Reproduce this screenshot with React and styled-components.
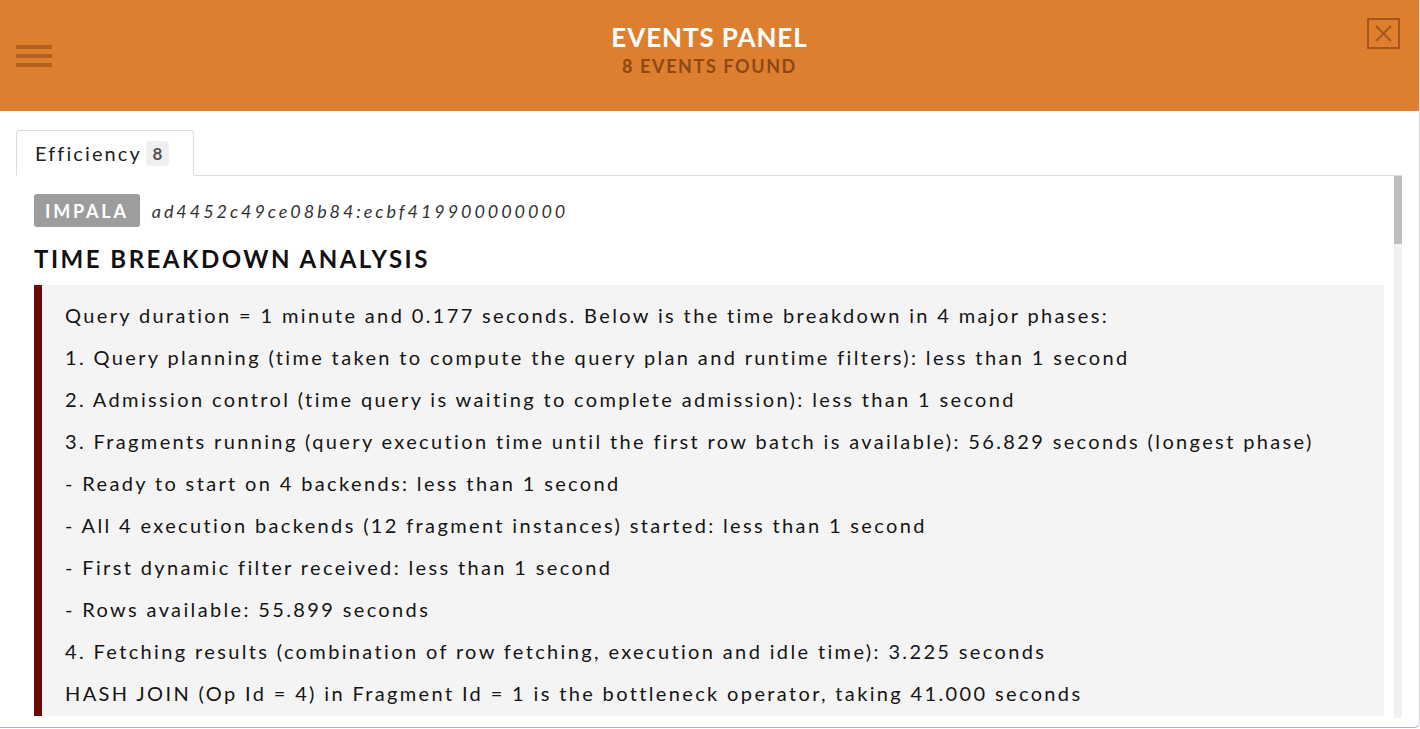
import React from 'react'
import styled, { createGlobalStyle } from 'styled-components'

const GlobalStyle = createGlobalStyle`
  html, body {
    margin: 0;
    padding: 0;
    background: #ffffff;
  }
  body {
    font-family: Lato, 'Open Sans', sans-serif;
    color: #111;
  }
`

const Panel = styled.div`
  width: 1420px;
  height: 728px;
  box-sizing: border-box;
  background: #fff;
  border-bottom: 1px solid #a9b3bd;
  border-right: 1px solid #d4dae0;
  border-bottom-right-radius: 6px;
  overflow: hidden;
  display: flex;
  flex-direction: column;
`

const Header = styled.header`
  height: 111px;
  flex-shrink: 0;
  background: #de7f30;
  display: grid;
  grid-template-columns: 1fr auto 1fr;
`

const MenuButton = styled.div`
  align-self: center;
  justify-self: start;
  margin-left: 16px;
  display: flex;
  flex-direction: column;
  gap: 5px;
  span {
    display: block;
    width: 36px;
    height: 4px;
    background: #b4611f;
  }
`

const TitleBlock = styled.div`
  display: flex;
  flex-direction: column;
  align-items: center;
  padding-top: 23px;
`

const Title = styled.h1`
  margin: 0;
  font-size: 26px;
  line-height: 28px;
  font-weight: 700;
  letter-spacing: 0.9px;
  color: #fff;
`

const Subtitle = styled.div`
  margin-top: 5px;
  font-size: 18px;
  line-height: 20px;
  font-weight: 700;
  letter-spacing: 1.6px;
  color: #8c4913;
`

const CloseButton = styled.div`
  justify-self: end;
  margin-top: 18px;
  margin-right: 19px;
  color: #a6581c;
`

const Body = styled.div`
  padding: 19px 16px 0 16px;
  display: flex;
  flex-direction: column;
`

const TabBar = styled.div`
  display: flex;
  width: 1386px;
  border-bottom: 1px solid #dcdcdc;
`

const Tab = styled.div`
  box-sizing: border-box;
  height: 46px;
  padding: 0 24px 0 18px;
  margin-bottom: -1px;
  display: flex;
  align-items: center;
  gap: 4px;
  border: 1px solid #dcdcdc;
  border-bottom-color: #fff;
  border-radius: 4px 4px 0 0;
  font-size: 20px;
  letter-spacing: 2.1px;
  color: #222;
`

const Count = styled.span`
  display: inline-flex;
  align-items: center;
  justify-content: center;
  width: 23px;
  height: 25px;
  border-radius: 4px;
  background: #efefef;
  color: #555;
  font-size: 17px;
  font-weight: 700;
  letter-spacing: 0;
`

const ScrollArea = styled.div`
  display: flex;
  align-items: flex-start;
  width: 1386px;
`

const Viewport = styled.div`
  flex: 1;
  height: 540px;
  overflow: hidden;
  padding: 18px 10px 0 18px;
  box-sizing: border-box;
`

const Scrollbar = styled.div`
  width: 8px;
  height: 542px;
  background: #f1f1f1;
  border-bottom-right-radius: 3px;
`

const Thumb = styled.div`
  height: 68px;
  background: #bdbdbd;
`

const MetaRow = styled.div`
  display: flex;
  align-items: center;
  gap: 12px;
`

const EngineTag = styled.span`
  display: inline-flex;
  align-items: center;
  height: 33px;
  padding: 0 11px 0 11px;
  border-radius: 3px;
  background: #9d9d9d;
  color: #fff;
  font-size: 18px;
  font-weight: 700;
  letter-spacing: 2.8px;
`

const QueryId = styled.span`
  font-size: 18px;
  font-style: italic;
  letter-spacing: 2.95px;
  color: #333;
`

const SectionTitle = styled.h2`
  margin: 18px 0 12px;
  font-size: 24px;
  line-height: 28px;
  font-weight: 700;
  letter-spacing: 2.5px;
  color: #111;
`

const Quote = styled.div`
  background: #f4f4f4;
  border-left: 8px solid #6b0a0a;
  padding: 9px 20px 14px 23px;
`

const Line = styled.div`
  font-size: 20px;
  line-height: 42px;
  letter-spacing: 2.36px;
  color: #151515;
  white-space: nowrap;
`

const lines = [
  'Query duration = 1 minute and 0.177 seconds. Below is the time breakdown in 4 major phases:',
  '1. Query planning (time taken to compute the query plan and runtime filters): less than 1 second',
  '2. Admission control (time query is waiting to complete admission): less than 1 second',
  '3. Fragments running (query execution time until the first row batch is available): 56.829 seconds (longest phase)',
  '- Ready to start on 4 backends: less than 1 second',
  '- All 4 execution backends (12 fragment instances) started: less than 1 second',
  '- First dynamic filter received: less than 1 second',
  '- Rows available: 55.899 seconds',
  '4. Fetching results (combination of row fetching, execution and idle time): 3.225 seconds',
  'HASH JOIN (Op Id = 4) in Fragment Id = 1 is the bottleneck operator, taking 41.000 seconds',
]

function CloseIcon() {
  return (
    <svg width="33" height="31" viewBox="0 0 33 31" fill="none">
      <rect x="1" y="1" width="31" height="29" stroke="currentColor" strokeWidth="2" />
      <path d="M9 8 L24 23 M24 8 L9 23" stroke="currentColor" strokeWidth="2" />
    </svg>
  )
}

export default function App() {
  return (
    <>
      <GlobalStyle />
      <Panel>
        <Header>
          <MenuButton>
            <span />
            <span />
            <span />
          </MenuButton>
          <TitleBlock>
            <Title>EVENTS PANEL</Title>
            <Subtitle>8 EVENTS FOUND</Subtitle>
          </TitleBlock>
          <CloseButton>
            <CloseIcon />
          </CloseButton>
        </Header>
        <Body>
          <TabBar>
            <Tab>
              Efficiency <Count>8</Count>
            </Tab>
          </TabBar>
          <ScrollArea>
            <Viewport>
              <MetaRow>
                <EngineTag>IMPALA</EngineTag>
                <QueryId>ad4452c49ce08b84:ecbf419900000000</QueryId>
              </MetaRow>
              <SectionTitle>TIME BREAKDOWN ANALYSIS</SectionTitle>
              <Quote>
                {lines.map((l, i) => (
                  <Line key={i}>{l}</Line>
                ))}
              </Quote>
            </Viewport>
            <Scrollbar>
              <Thumb />
            </Scrollbar>
          </ScrollArea>
        </Body>
      </Panel>
    </>
  )
}
